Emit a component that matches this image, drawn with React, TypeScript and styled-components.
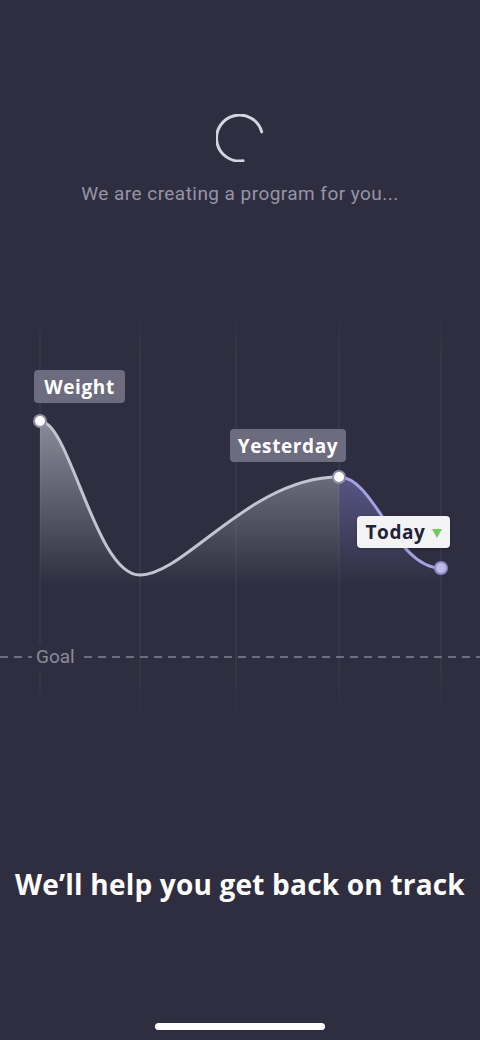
import React from 'react'
import styled, { createGlobalStyle } from 'styled-components'

const GlobalStyle = createGlobalStyle`
  html, body {
    margin: 0;
    padding: 0;
    background: #2f2e40;
  }
  * {
    box-sizing: border-box;
  }
`

const Page = styled.div`
  width: 480px;
  height: 1040px;
  overflow: hidden;
  display: flex;
  flex-direction: column;
  align-items: center;
  background: #2f2e40;
  font-family: 'Open Sans', 'Liberation Sans', sans-serif;
`

const Loader = styled.section`
  padding-top: 114px;
  display: flex;
  flex-direction: column;
  align-items: center;
`

const Caption = styled.p`
  margin: 20px 0 0;
  font-family: Roboto, 'Liberation Sans', sans-serif;
  font-size: 19px;
  line-height: 24px;
  color: #9695a8;
  letter-spacing: 0.45px;
`

const ChartArea = styled.div`
  position: relative;
  margin-top: 104px;
  width: 480px;
  height: 420px;
`

const ChartSvg = styled.svg`
  display: block;
`

const Label = styled.div<{ $light?: boolean }>`
  position: absolute;
  display: flex;
  align-items: center;
  justify-content: center;
  gap: 6px;
  height: 33px;
  padding: 0 8px;
  border-radius: 4px;
  font-family: 'Open Sans', 'Liberation Sans', sans-serif;
  font-weight: 700;
  font-size: 19px;
  letter-spacing: 0.6px;
  color: ${({ $light }) => ($light ? '#232236' : '#ffffff')};
  background: ${({ $light }) => ($light ? '#f3f3f6' : '#6d6c7f')};
  box-shadow: ${({ $light }) => ($light ? '0 1px 3px rgba(0,0,0,0.25)' : 'none')};
`

const DownArrow = styled.span`
  width: 0;
  height: 0;
  border-left: 5px solid transparent;
  border-right: 5px solid transparent;
  border-top: 9px solid #6dcd58;
  margin-top: 2px;
`

const GoalText = styled.span`
  position: absolute;
  left: 32px;
  top: 334px;
  padding: 0 4px;
  background: #2f2e40;
  font-family: Roboto, 'Liberation Sans', sans-serif;
  font-size: 19px;
  line-height: 26px;
  color: #8b8a9c;
`

const Headline = styled.h1`
  margin: 137px 0 0;
  font-family: 'Open Sans', 'Liberation Sans', sans-serif;
  font-weight: 700;
  font-size: 28px;
  line-height: 34px;
  color: #ffffff;
  letter-spacing: 0.2px;
  white-space: nowrap;
`

const HomeBar = styled.div`
  margin-top: 122px;
  width: 170px;
  height: 7px;
  border-radius: 4px;
  background: #ffffff;
`

const gridX = [40, 140, 236, 339, 441]

function Spinner() {
  return (
    <svg width="48" height="48" viewBox="0 0 48 48">
      <path
        d="M45.7 17.9 A23 23 0 1 0 27 46.8"
        fill="none"
        stroke="#d4d3e3"
        strokeWidth="3"
        strokeLinecap="round"
      />
    </svg>
  )
}

function Chart() {
  // page y minus 310 = chart y
  const grey = 'M40,111 C70,111 95,265 140,265 C185,265 250,167 339,167'
  const purple = 'M339,167 C375,167 395,258 441,258'

  return (
    <ChartSvg width="480" height="420" viewBox="0 0 480 420">
      <defs>
        <linearGradient id="grid" x1="0" y1="0" x2="0" y2="1">
          <stop offset="0" stopColor="#ffffff" stopOpacity="0.02" />
          <stop offset="0.1" stopColor="#ffffff" stopOpacity="0.08" />
          <stop offset="0.85" stopColor="#ffffff" stopOpacity="0.08" />
          <stop offset="1" stopColor="#ffffff" stopOpacity="0" />
        </linearGradient>
        <linearGradient id="greyFill" x1="0" y1="111" x2="0" y2="275" gradientUnits="userSpaceOnUse">
          <stop offset="0" stopColor="#c8c7d4" stopOpacity="0.6" />
          <stop offset="1" stopColor="#c8c7d4" stopOpacity="0" />
        </linearGradient>
        <linearGradient id="purpleFill" x1="0" y1="167" x2="0" y2="275" gradientUnits="userSpaceOnUse">
          <stop offset="0" stopColor="#8886d8" stopOpacity="0.45" />
          <stop offset="1" stopColor="#8886d8" stopOpacity="0" />
        </linearGradient>
      </defs>

      {gridX.map((x) => (
        <rect key={x} x={x - 0.5} y="10" width="1" height="400" fill="url(#grid)" />
      ))}

      <path d={`${grey} L339,280 L40,280 Z`} fill="url(#greyFill)" />
      <path d={`${purple} L441,280 L339,280 Z`} fill="url(#purpleFill)" />

      <line x1="0" y1="347" x2="480" y2="347" stroke="#858496" strokeWidth="1.5" strokeDasharray="8 6" />

      <path d={grey} fill="none" stroke="#c4c3d0" strokeWidth="3" strokeLinecap="round" />
      <path d={purple} fill="none" stroke="#a5a2e4" strokeWidth="3" strokeLinecap="round" />

      <circle cx="40" cy="111" r="6" fill="#ffffff" stroke="#8f8ea0" strokeWidth="2" />
      <circle cx="339" cy="167" r="6" fill="#ffffff" stroke="#8f8ea0" strokeWidth="2" />
      <circle cx="441" cy="258" r="6" fill="#bdbbe2" stroke="#8e8cc8" strokeWidth="2" />
    </ChartSvg>
  )
}

export default function App() {
  return (
    <>
      <GlobalStyle />
      <Page>
        <Loader>
          <Spinner />
          <Caption>We are creating a program for you...</Caption>
        </Loader>

        <ChartArea>
          <Chart />
          <Label style={{ left: 34, top: 60, width: 91 }}>Weight</Label>
          <Label style={{ left: 230, top: 119, width: 116 }}>Yesterday</Label>
          <Label $light style={{ left: 357, top: 206, width: 93, height: 32 }}>
            Today
            <DownArrow />
          </Label>
          <GoalText>Goal</GoalText>
        </ChartArea>

        <Headline>We’ll help you get back on track</Headline>
        <HomeBar />
      </Page>
    </>
  )
}
